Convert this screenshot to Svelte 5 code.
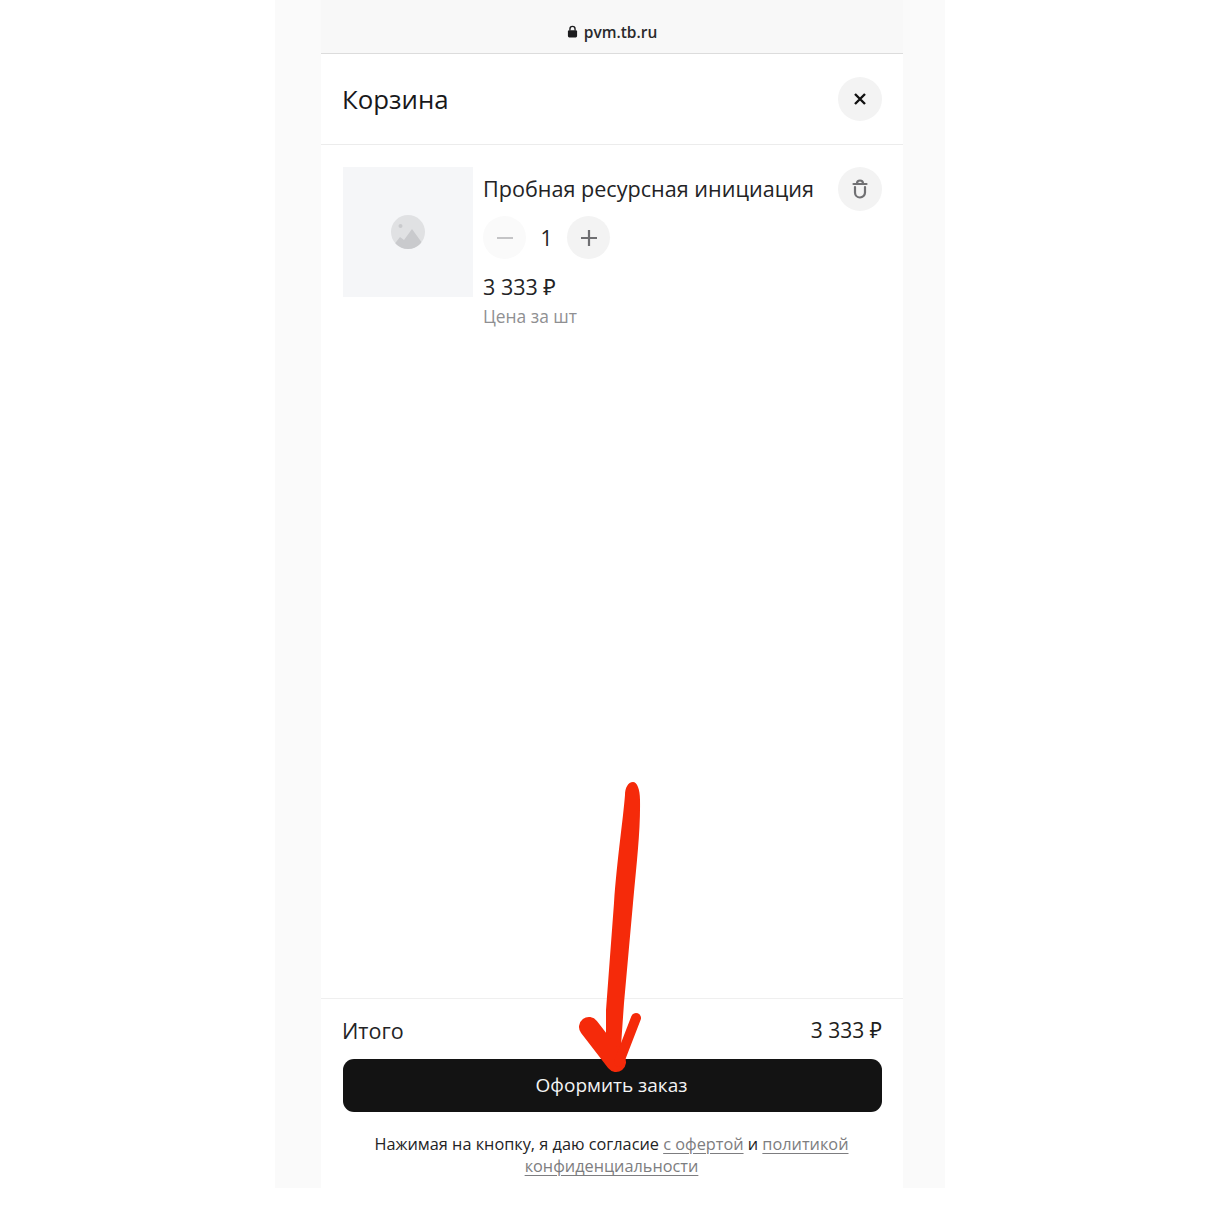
<script>
  // cart contents as shown in the screenshot
  const item = { title: 'Пробная ресурсная инициация', qty: 1, price: '3 333 ₽', unit: 'Цена за шт' };
  const total = '3 333 ₽';
</script>

<div class="page">
  <div class="phone">
    <div class="urlbar">
      <svg class="lock" viewBox="0 0 12 14" aria-hidden="true">
        <path d="M3.200 6V4.200a2.800 2.800 0 0 1 5.600 0V6" fill="none" stroke="#1c1c1e" stroke-width="1.500"/>
        <rect x="1" y="5.600" width="10" height="7.900" rx="1.500" fill="#1c1c1e"/>
      </svg>
      <span>pvm.tb.ru</span>
    </div>

    <div class="panel">
      <header class="head">
        <h1>Корзина</h1>
        <button class="round" aria-label="Закрыть">
          <svg viewBox="0 0 16 16" width="16" height="16">
            <path d="M3 3l10 10M13 3L3 13" stroke="#111" stroke-width="2.400" fill="none"/>
          </svg>
        </button>
      </header>

      <section class="list">
        <div class="thumb">
          <svg viewBox="0 0 34 34" width="34" height="34">
            <defs><clipPath id="ph"><circle cx="17" cy="17" r="17"/></clipPath></defs>
            <circle cx="17" cy="17" r="17" fill="#e0e1e3"/>
            <g clip-path="url(#ph)" fill="#c9cacd">
              <path d="M2 31l7-9 4 3 8-11 13 18v4H2z"/>
              <circle cx="9.500" cy="11" r="2"/>
            </g>
          </svg>
        </div>
        <div class="info">
          <div class="title">{item.title}</div>
          <div class="qty">
            <button class="round faint" aria-label="Меньше">
              <svg viewBox="0 0 20 20" width="20" height="20"><path d="M2 10h16" stroke="#c4c4c6" stroke-width="2"/></svg>
            </button>
            <span class="count">{item.qty}</span>
            <button class="round" aria-label="Больше">
              <svg viewBox="0 0 20 20" width="20" height="20"><path d="M2 10h16M10 2v16" stroke="#6f6f72" stroke-width="2.200"/></svg>
            </button>
          </div>
          <div class="price">{item.price}</div>
          <div class="unit">{item.unit}</div>
        </div>
        <button class="round" aria-label="Удалить">
          <svg viewBox="0 0 16 20" width="16" height="20" fill="none" stroke="#707073" stroke-width="2.200" stroke-linecap="round">
            <path d="M1.500 5h13"/>
            <path d="M5 4.500a3 3 0 0 1 6 0"/>
            <path d="M3 8v5.500a5 5 0 0 0 5 5a5 5 0 0 0 5-5V8"/>
          </svg>
        </button>
      </section>

      <footer class="foot">
        <div class="total">
          <span class="label">Итого</span>
          <span class="sum">{total}</span>
        </div>
        <button class="checkout">Оформить заказ</button>
        <p class="terms">
          Нажимая на кнопку, я даю согласие <a href="#offer">с офертой</a> и <a href="#policy">политикой</a> <a href="#policy">конфиденциальности</a>
        </p>
      </footer>
    </div>
  </div>

  <!-- hand-drawn annotation on top of the screenshot, drawn in page coordinates -->
  <svg class="arrow" viewBox="570 770 80 310" width="80" height="310" fill="#f52a0a" stroke="#f52a0a" stroke-linecap="round" stroke-linejoin="round">
    <path stroke="none" d="M633 782C637 782 640 789 640 800C640.500 830 637 860 633 903L624 1003L620 1060L606 1060L606 1010L614 903C617 860 623 820 625 795C625 788 628 782 633 782z"/>
    <path d="M589 1027L616 1062" stroke-width="20" fill="none"/>
    <path d="M636 1018L619 1062" stroke-width="10" fill="none"/>
  </svg>
</div>

<style>
  :global(body) {
    margin: 0;
    background: #fff;
    font-family: "Open Sans", "Noto Sans", sans-serif;
    color: #1a1a1c;
  }

  .page {
    position: relative;
    width: 1214px;
    height: 1214px;
    box-sizing: border-box;
    padding-left: 275px;
    overflow: hidden;
  }

  .phone {
    width: 670px;
    height: 1188px;
    box-sizing: border-box;
    padding-left: 46px;
    background: #fafafa;
    display: flex;
    flex-direction: column;
  }

  .urlbar {
    width: 582px;
    height: 54px;
    flex: none;
    box-sizing: border-box;
    padding: 10px 0 0 0;
    border-bottom: 1px solid #dcdcdc;
    background: #f8f8f8;
    display: flex;
    align-items: center;
    justify-content: center;
    gap: 6px;
    font-size: 15.500px;
    font-weight: 600;
    color: #2a2a2c;
  }

  .lock { width: 11px; height: 13px; }

  .panel {
    width: 582px;
    flex: 1;
    background: #fff;
    display: flex;
    flex-direction: column;
  }

  .head {
    height: 91px;
    flex: none;
    box-sizing: border-box;
    padding: 0 21px 0 22px;
    border-bottom: 1px solid #ececec;
    display: flex;
    align-items: center;
    justify-content: space-between;
  }

  h1 {
    margin: 0 0 0 -1px;
    font-size: 25.800px;
    font-weight: 400;
    color: #18181a;
  }

  .round {
    width: 44px;
    height: 44px;
    flex: none;
    padding: 0;
    border: 0;
    border-radius: 50%;
    background: #f3f3f3;
    display: flex;
    align-items: center;
    justify-content: center;
  }

  .list {
    flex: 1;
    padding: 22px 21px 0 22px;
    display: flex;
    align-items: flex-start;
    gap: 10px;
  }

  .thumb {
    width: 130px;
    height: 130px;
    flex: none;
    background: #f5f6f8;
    display: flex;
    align-items: center;
    justify-content: center;
  }

  .info {
    flex: 1;
    min-width: 0;
  }

  .title {
    font-size: 21.600px;
    line-height: 44px;
    white-space: nowrap;
    color: #232325;
  }

  .qty {
    margin-top: 5px;
    display: flex;
    align-items: center;
  }

  .qty .round { width: 43px; height: 43px; }
  .faint { background: #fafafa; }

  .count {
    width: 41px;
    text-align: center;
    font-size: 21px;
    color: #232325;
  }

  .price {
    margin-top: 13px;
    font-size: 21.500px;
    line-height: 30px;
    color: #232325;
  }

  .unit {
    font-size: 17.400px;
    line-height: 29px;
    color: #8f8f92;
  }

  .foot {
    flex: none;
    box-sizing: border-box;
    height: 190px;
    padding: 0 21px 0 22px;
    border-top: 1px solid #efefef;
  }

  .total {
    height: 60px;
    padding-top: 2px;
    box-sizing: border-box;
    display: flex;
    align-items: center;
    justify-content: space-between;
    font-size: 21px;
  }

  .label { font-size: 21.500px; color: #232325; margin-left: -1px; }
  .sum { color: #1e1e20; }

  .checkout {
    display: block;
    width: 100%;
    height: 53px;
    padding: 0 2px 2px 0;
    border: 0;
    border-radius: 11px;
    background: #131313;
    color: #f4f4f4;
    font: 400 19px "Open Sans", "Noto Sans", sans-serif;
  }

  .terms {
    margin: 21px 2px 0 0;
    font-size: 16.300px;
    line-height: 22px;
    text-align: center;
    color: #232325;
  }

  .terms a {
    color: #7d7d80;
    text-decoration: underline;
    text-underline-offset: 3px;
  }

  .arrow {
    position: absolute;
    left: 570px;
    top: 770px;
  }
</style>
